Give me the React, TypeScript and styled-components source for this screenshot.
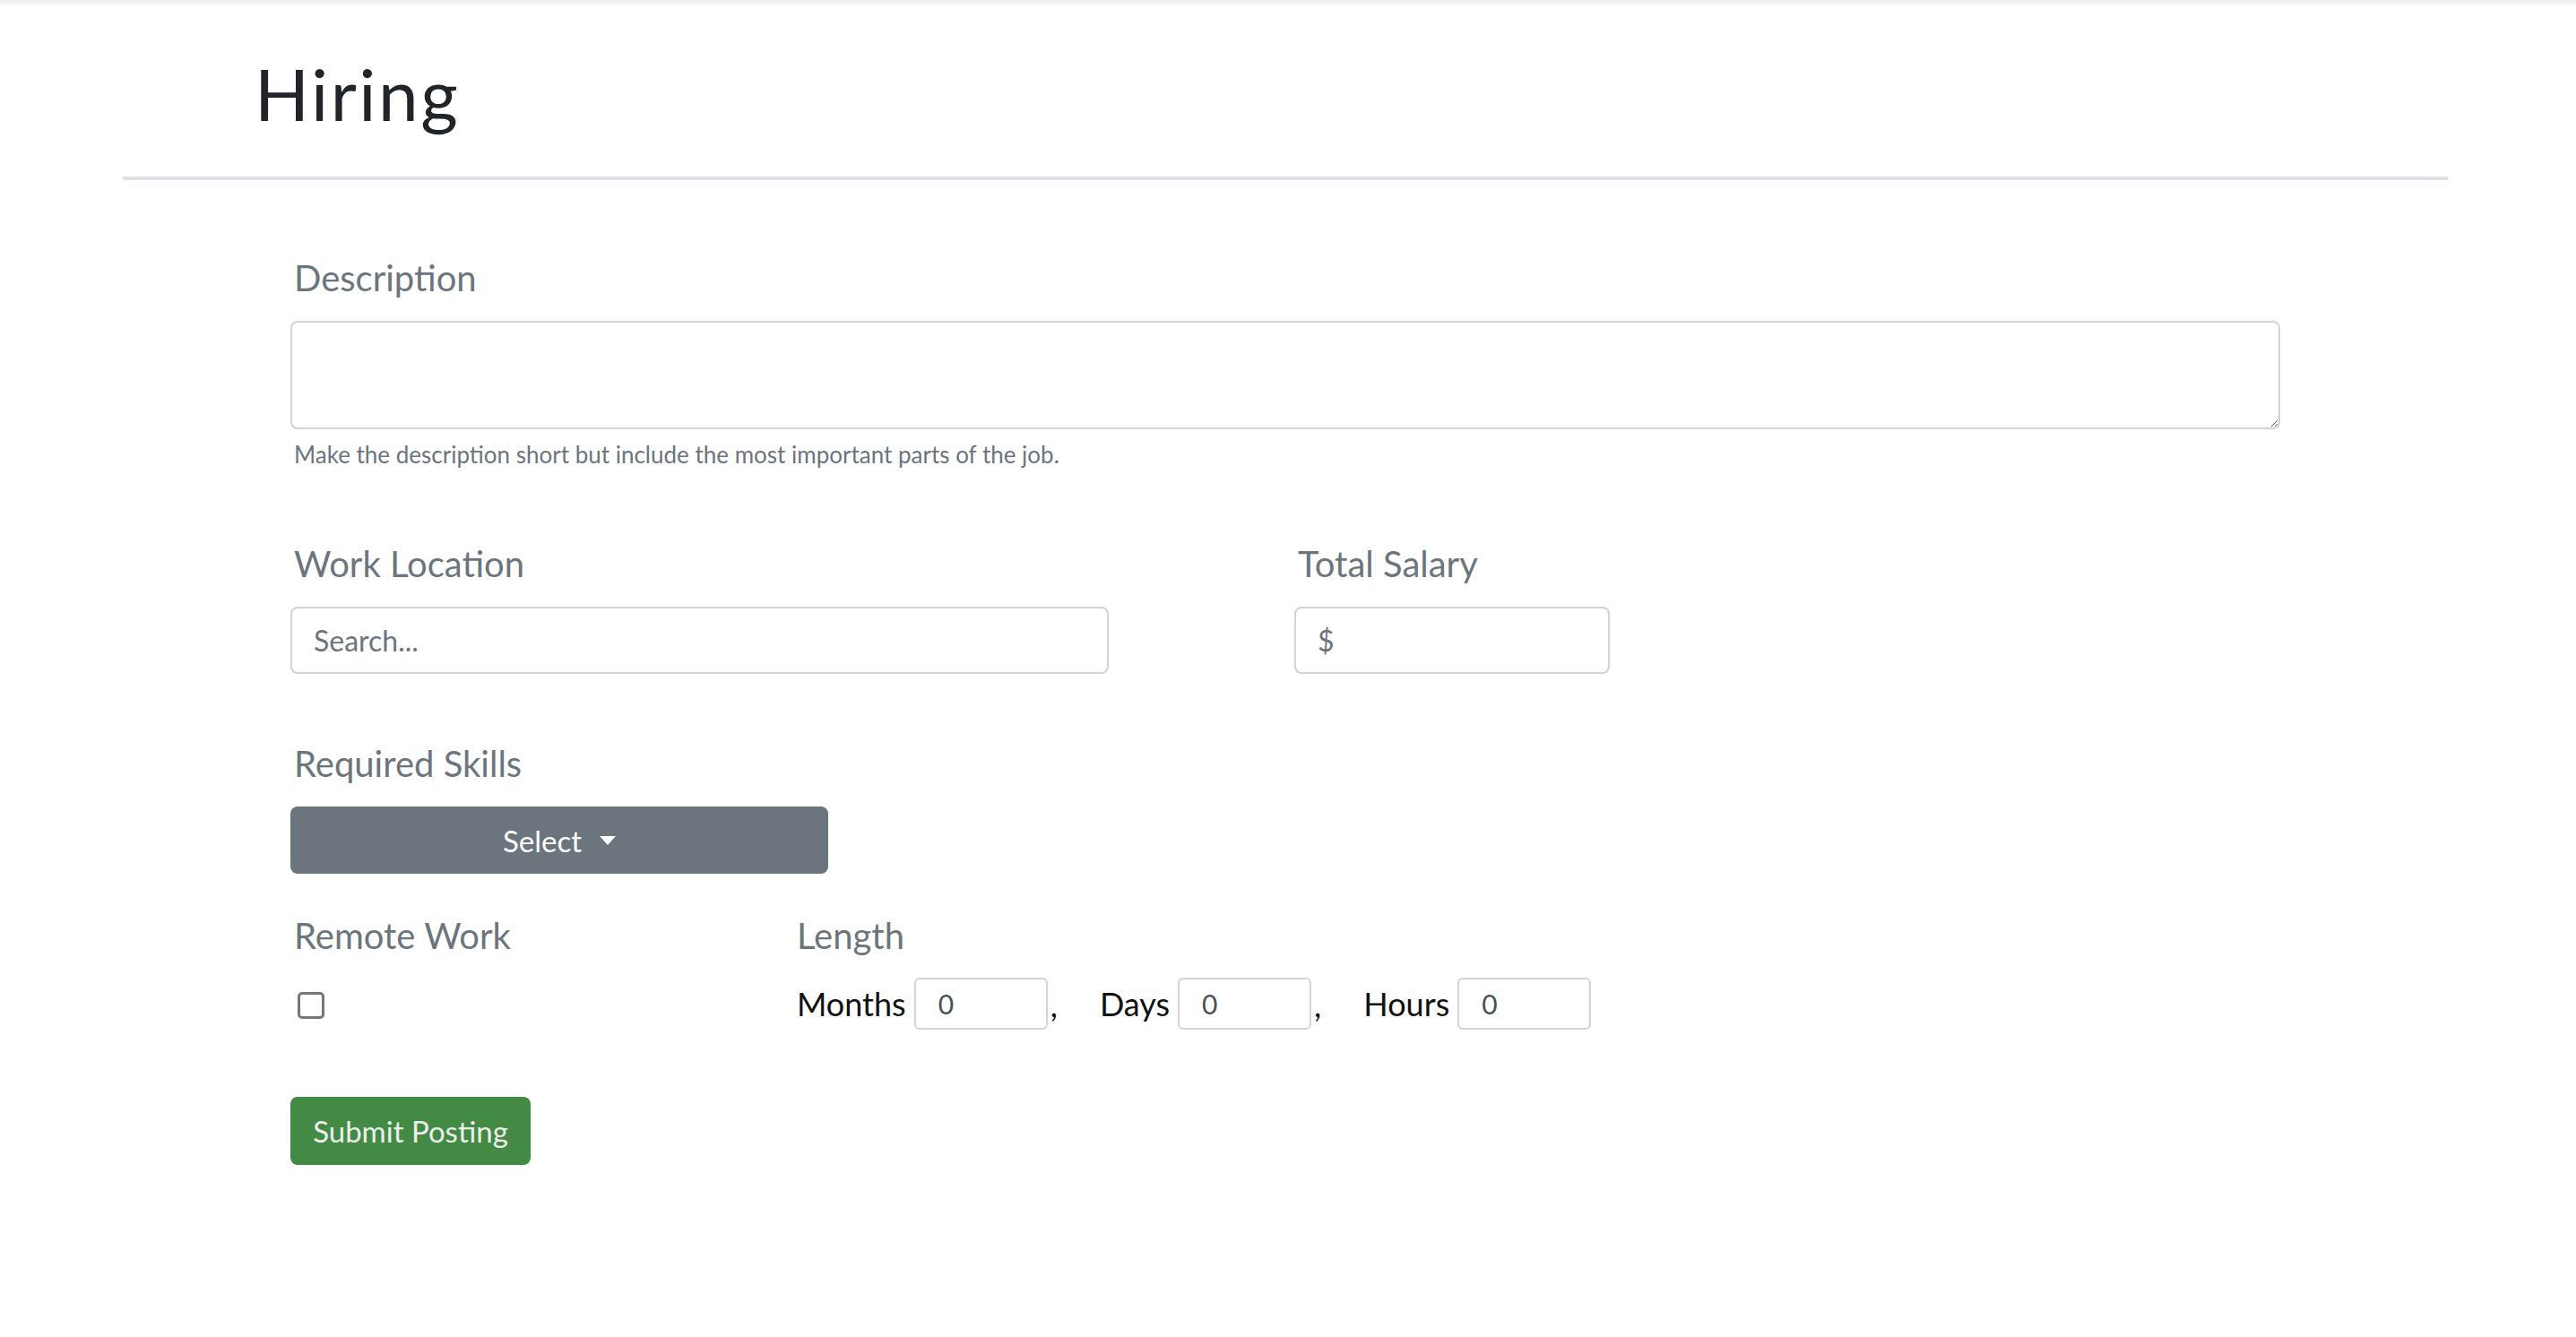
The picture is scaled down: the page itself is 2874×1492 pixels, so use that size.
import React from 'react';
import styled, { createGlobalStyle } from 'styled-components';

const GlobalStyle = createGlobalStyle`
  body {
    margin: 0;
    background: #ffffff;
    font-family: 'Lato', 'Noto Sans', sans-serif;
  }
  * {
    box-sizing: border-box;
  }
`;

const TopShade = styled.div`
  height: 8px;
  background: linear-gradient(to bottom, #ececec, rgba(255, 255, 255, 0));
`;

const Container = styled.div`
  margin-left: 137px;
  width: 2594px;
  padding-bottom: 120px;
`;

const Header = styled.header`
  padding: 48px 0 0 147px;
`;

const Title = styled.h1`
  margin: 0;
  font-size: 80px;
  line-height: 96px;
  font-weight: 400;
  letter-spacing: 2.5px;
  color: #212529;
`;

const Divider = styled.hr`
  margin: 45px 0 0;
  border: 0;
  height: 4px;
  background: #dee1e6;
`;

const Form = styled.form`
  padding: 85px 0 0 187px;
`;

const Group = styled.div<{ gap?: number }>`
  margin-bottom: ${({ gap }) => gap ?? 0}px;
`;

const Label = styled.label<{ $flush?: boolean }>`
  display: block;
  padding-left: ${({ $flush }) => ($flush ? 0 : 4)}px;
  font-size: 40px;
  line-height: 48px;
  color: #6c757d;
  margin-bottom: 24px;
`;

const TextArea = styled.textarea`
  display: block;
  width: 2220px;
  height: 121px;
  border: 2px solid #ced4da;
  border-radius: 8px;
  resize: vertical;
  font-family: inherit;
  font-size: 32px;
  padding: 12px 24px;
  outline: none;
`;

const Help = styled.small`
  display: block;
  margin-top: 13px;
  padding-left: 4px;
  font-size: 26px;
  line-height: 31px;
  color: #6c757d;
`;

const TwoCols = styled.div`
  display: grid;
  grid-template-columns: 913px 352px;
  column-gap: 207px;
`;

const TextInput = styled.input`
  display: block;
  width: 100%;
  height: 75px;
  border: 2px solid #ced4da;
  border-radius: 8px;
  padding: 0 24px;
  font-family: inherit;
  font-size: 32px;
  color: #495057;
  outline: none;

  &::placeholder {
    color: #6c757d;
  }
`;

const SelectButton = styled.button`
  display: flex;
  align-items: center;
  justify-content: center;
  width: 600px;
  height: 75px;
  border: 0;
  border-radius: 8px;
  background: #6c757d;
  color: #ffffff;
  font-family: inherit;
  font-size: 33px;
`;

const Caret = styled.span`
  margin-left: 20px;
  width: 0;
  height: 0;
  border-left: 9px solid transparent;
  border-right: 9px solid transparent;
  border-top: 10px solid #ffffff;
`;

const OptionsRow = styled.div`
  display: grid;
  grid-template-columns: 565px auto;
`;

const CheckBox = styled.input`
  appearance: none;
  display: block;
  margin: 39px 0 0 8px;
  width: 30px;
  height: 30px;
  border: 3px solid #777777;
  border-radius: 5px;
  background: #ffffff;
`;

const LengthRow = styled.div`
  display: flex;
  align-items: center;
  gap: 47px;
  margin-top: -1px;
`;

const Unit = styled.div`
  display: flex;
  align-items: center;
  font-size: 36px;
  color: #111111;
`;

const UnitInput = styled.input`
  width: 149px;
  height: 58px;
  margin-left: 9px;
  border: 2px solid #ced4da;
  border-radius: 6px;
  padding: 0 0 0 25px;
  font-family: inherit;
  font-size: 30px;
  color: #495057;
  outline: none;
`;

const Comma = styled.span`
  margin-left: 3px;
  align-self: flex-end;
  padding-bottom: 6px;
`;

const SubmitButton = styled.button`
  width: 268px;
  height: 76px;
  border: 0;
  border-radius: 8px;
  background: #438a44;
  color: #ecefec;
  font-family: inherit;
  font-size: 33px;
`;

const units = ['Months', 'Days', 'Hours'];

export default function App() {
  return (
    <>
      <GlobalStyle />
      <TopShade />
      <Container>
        <Header>
          <Title>Hiring</Title>
        </Header>
        <Divider />
        <Form onSubmit={(e) => e.preventDefault()}>
          <Group gap={82}>
            <Label>Description</Label>
            <TextArea />
            <Help>Make the description short but include the most important parts of the job.</Help>
          </Group>
          <Group gap={76}>
            <TwoCols>
              <div>
                <Label>Work Location</Label>
                <TextInput placeholder="Search..." />
              </div>
              <div>
                <Label>Total Salary</Label>
                <TextInput placeholder="$" />
              </div>
            </TwoCols>
          </Group>
          <Group gap={45}>
            <Label>Required Skills</Label>
            <SelectButton type="button">
              Select
              <Caret />
            </SelectButton>
          </Group>
          <Group gap={75}>
            <OptionsRow>
              <div>
                <Label>Remote Work</Label>
                <CheckBox type="checkbox" />
              </div>
              <div>
                <Label $flush>Length</Label>
                <LengthRow>
                  {units.map((u, i) => (
                    <Unit key={u}>
                      {u}
                      <UnitInput defaultValue="0" />
                      {i < units.length - 1 && <Comma>,</Comma>}
                    </Unit>
                  ))}
                </LengthRow>
              </div>
            </OptionsRow>
          </Group>
          <SubmitButton type="submit">Submit Posting</SubmitButton>
        </Form>
      </Container>
    </>
  );
}
